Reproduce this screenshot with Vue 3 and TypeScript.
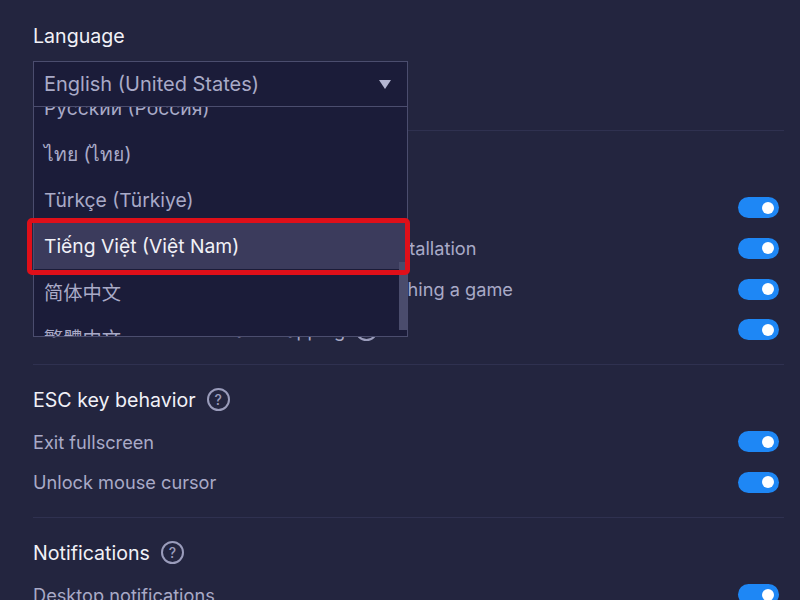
<script setup lang="ts">
import { onMounted, ref } from 'vue'

type Row = { label: string; help?: boolean }
type Section = { title: string; help: boolean; rows: Row[] }

const languages = [
  'English (United States)',
  'Deutsch (Deutschland)',
  'Español (España)',
  'Español (México)',
  'Français (France)',
  'Bahasa Indonesia',
  'Italiano (Italia)',
  '日本語',
  '한국어',
  'Polski (Polska)',
  'Português (Brasil)',
  'Русский (Россия)',
  'ไทย (ไทย)',
  'Türkçe (Türkiye)',
  'Tiếng Việt (Việt Nam)',
  '简体中文',
  '繁體中文',
]

const sections: Section[] = [
  {
    title: 'Preferences',
    help: false,
    rows: [
      { label: 'Show game guide on launch' },
      { label: 'Show recommendations after new game installation' },
      { label: 'Show a confirmation dialog box when launching a game' },
      { label: 'Warn me before home tab swapping', help: true },
    ],
  },
  {
    title: 'ESC key behavior',
    help: true,
    rows: [{ label: 'Exit fullscreen' }, { label: 'Unlock mouse cursor' }],
  },
  {
    title: 'Notifications',
    help: true,
    rows: [{ label: 'Desktop notifications' }],
  },
]

const list = ref<HTMLElement | null>(null)

onMounted(() => {
  if (list.value) list.value.scrollTop = 528
})
</script>

<template>
  <div class="page">
    <section class="section lang">
      <h2 class="title">Language</h2>
      <div class="select">
        <span>English (United States)</span>
        <span class="caret"></span>
      </div>
    </section>

    <section v-for="s in sections" :key="s.title" class="section">
      <h2 class="title">
        {{ s.title }}
        <span v-if="s.help" class="help">?</span>
      </h2>
      <div v-for="r in s.rows" :key="r.label" class="row">
        <span class="label">
          {{ r.label }}
          <span v-if="r.help" class="help small">?</span>
        </span>
        <span class="toggle"><i></i></span>
      </div>
    </section>

    <div ref="list" class="dropdown">
      <div
        v-for="l in languages"
        :key="l"
        class="option"
        :class="{ active: l.startsWith('Tiếng') }"
      >
        {{ l }}
      </div>
    </div>
    <div class="thumb"></div>

    <div class="mark"></div>
  </div>
</template>

<style scoped>
.page {
  position: relative;
  box-sizing: border-box;
  width: 800px;
  height: 600px;
  overflow: hidden;
  padding: 0 16px 0 33px;
  background: #23253f;
  font-family: Inter, "Noto Sans CJK SC", "Noto Sans", sans-serif;
  color: #a9aac7;
}

.section {
  padding: 23px 0 14px;
  border-bottom: 1px solid #2f3150;
}

.lang {
  box-sizing: border-box;
  height: 131px;
  padding-top: 24px;
}

.title {
  display: flex;
  align-items: center;
  gap: 11px;
  height: 24px;
  margin: 0 0 9.6px;
  font-size: 19.6px;
  font-weight: 400;
  color: #f1f1f7;
}

.help {
  display: inline-flex;
  align-items: center;
  justify-content: center;
  box-sizing: border-box;
  width: 23px;
  height: 23px;
  border: 2px solid #9a9cbb;
  border-radius: 50%;
  font-size: 14px;
  font-weight: 500;
  color: #9a9cbb;
}

.help.small {
  margin-left: 10px;
}

.select {
  display: flex;
  align-items: center;
  justify-content: space-between;
  box-sizing: border-box;
  width: 375px;
  height: 46px;
  margin-top: 13px;
  padding: 0 16px 0 10px;
  border: 1px solid #4b4d6e;
  background: #1b1c39;
  font-size: 20px;
}

.caret {
  width: 0;
  height: 0;
  border-left: 6.5px solid transparent;
  border-right: 6.5px solid transparent;
  border-top: 9px solid #b4b6d2;
}

.row {
  display: flex;
  align-items: center;
  justify-content: space-between;
  height: 40.6px;
  padding-right: 5px;
  font-size: 18.2px;
}

.label {
  display: inline-flex;
  align-items: center;
  white-space: nowrap;
}

.toggle {
  display: flex;
  align-items: center;
  justify-content: flex-end;
  box-sizing: border-box;
  width: 41px;
  height: 21px;
  padding-right: 5px;
  border-radius: 11px;
  background: #1e87f5;
}

.toggle i {
  width: 12px;
  height: 12px;
  border-radius: 50%;
  background: #fff;
}

.dropdown {
  position: absolute;
  top: 107px;
  left: 33px;
  box-sizing: border-box;
  width: 375px;
  height: 230px;
  overflow: hidden;
  border: 1px solid #4b4d6e;
  border-top: 0;
  background: #1b1c39;
  font-size: 19.3px;
}

.option {
  display: flex;
  align-items: center;
  height: 46px;
  padding-left: 10px;
  white-space: nowrap;
}

.option.active {
  background: #3b3b5c;
  color: #f1f1f7;
}

.thumb {
  position: absolute;
  top: 262px;
  left: 399px;
  width: 8px;
  height: 68px;
  background: #4a4c6c;
}

.mark {
  position: absolute;
  top: 218px;
  left: 27px;
  box-sizing: border-box;
  width: 383px;
  height: 57px;
  border: 5px solid #df0f19;
  border-radius: 5px;
}
</style>

<style>
html,
body {
  margin: 0;
  background: #23253f;
  overflow: hidden;
}
</style>
